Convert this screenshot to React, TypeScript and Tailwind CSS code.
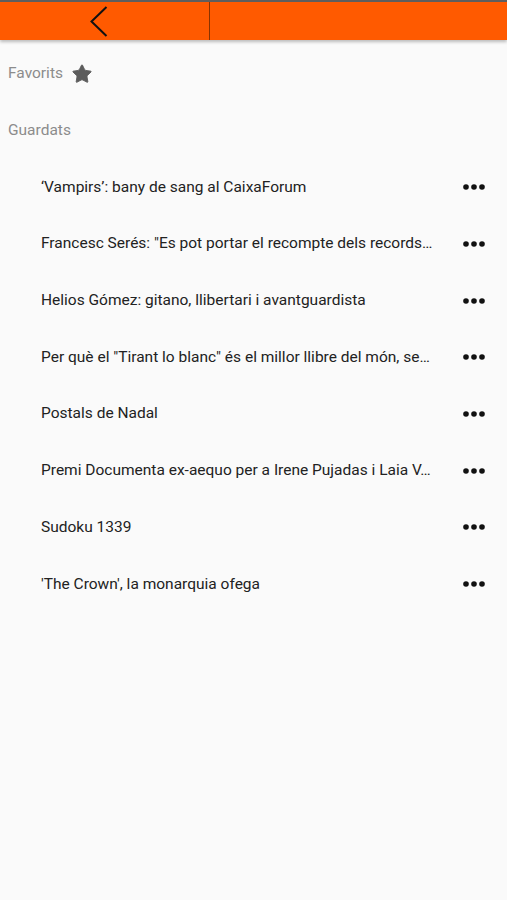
import { Star } from 'lucide-react'

const saved = [
  '‘Vampirs’: bany de sang al CaixaForum',
  'Francesc Serés: "Es pot portar el recompte dels records…',
  'Helios Gómez: gitano, llibertari i avantguardista',
  'Per què el "Tirant lo blanc" és el millor llibre del món, se…',
  'Postals de Nadal',
  'Premi Documenta ex-aequo per a Irene Pujadas i Laia V…',
  'Sudoku 1339',
  "'The Crown', la monarquia ofega",
]

function MoreDots() {
  return (
    <svg viewBox="0 0 22 6" className="h-[6px] w-[22px]" fill="#111">
      <circle cx="3" cy="3" r="2.8" />
      <circle cx="11" cy="3" r="2.8" />
      <circle cx="19" cy="3" r="2.8" />
    </svg>
  )
}

export default function App() {
  return (
    <div className="min-h-[900px] bg-[#fafafa] font-['Roboto',sans-serif]">
      <header className="relative z-10 flex h-10 border-t-2 border-[#5e5e5e] bg-[#ff5a00] shadow-[0_2px_3px_rgba(0,0,0,0.25)]">
        <button type="button" className="flex w-[210px] items-center justify-center border-r border-[#8a3300] pr-[12px]">
          <svg viewBox="0 0 18 31" className="h-[31px] w-[18px]" fill="none" stroke="#111" strokeWidth={2}>
            <polyline points="16.5,1 1.5,15.5 16.5,30" />
          </svg>
        </button>
        <div className="flex-1" />
      </header>

      <main className="pt-[5px]">
        <div className="flex h-[57px] items-center gap-[8px] pl-[8px] text-[15.5px] text-[#8c8c8c]">
          <span>Favorits</span>
          <Star className="h-[22px] w-[22px]" fill="#5c5c5c" stroke="#5c5c5c" strokeWidth={1} />
        </div>
        <div className="flex h-[57px] items-center pl-[8px] text-[15.5px] text-[#8c8c8c]">Guardats</div>

        <ul>
          {saved.map((title) => (
            <li key={title} className="flex h-[56.7px] items-center pl-[41px] pr-[22px]">
              <span className="whitespace-nowrap text-[15.5px] text-[#222]">{title}</span>
              <span className="ml-auto flex items-center">
                <MoreDots />
              </span>
            </li>
          ))}
        </ul>
      </main>
    </div>
  )
}
